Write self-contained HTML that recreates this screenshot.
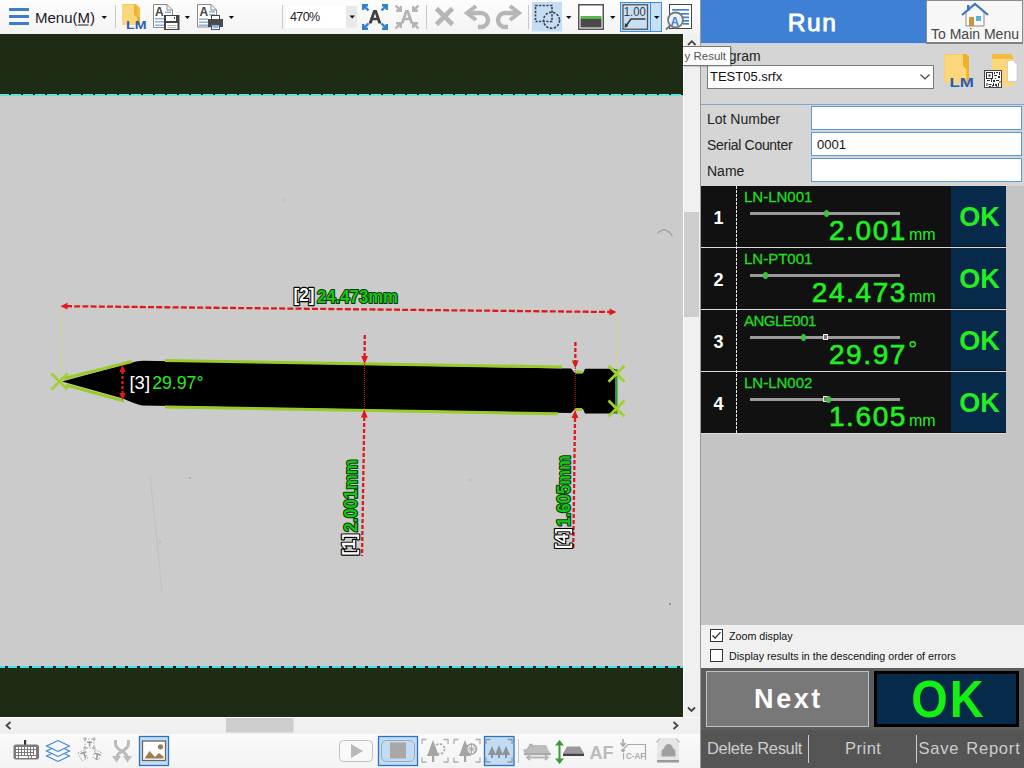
<!DOCTYPE html>
<html><head><meta charset="utf-8">
<style>
*{box-sizing:border-box;margin:0;padding:0}
html,body{width:1024px;height:768px;overflow:hidden;background:#f0f0f0;font-family:"Liberation Sans",sans-serif}
.a{position:absolute}
#tb{left:0;top:0;width:700px;height:34px;background:linear-gradient(#fdfdfd,#f3f3f3)}
#img{left:0;top:34px;width:683px;height:683px;background:#1f2c15;overflow:hidden}
#gray{left:0;top:62px;width:683px;height:570px;background:#cbcbcb}
#vsb{left:683px;top:34px;width:17px;height:683px;background:#f0f0f0;border-left:1px solid #fff}
#hsb{left:0;top:717px;width:700px;height:17px;background:#f0f0f0;border-top:1px solid #fff}
#btb{left:0;top:734px;width:700px;height:34px;background:linear-gradient(#fafafa,#f3f3f3)}
#rp{left:700px;top:0;width:324px;height:768px;background:#d5d5d5;border-left:1px solid #9a9a9a}
</style></head><body>
<div id="tb" class="a"></div>
<svg class="a" style="left:0;top:0" width="700" height="34" viewBox="0 0 700 34">
<g fill="#3d7ccb"><rect x="9" y="8" width="20" height="3" rx="0.5"/><rect x="9" y="15" width="20" height="3" rx="0.5"/><rect x="9" y="22" width="20" height="3" rx="0.5"/></g>
<text x="35" y="23" font-family="Liberation Sans" font-size="15" fill="#1a1a2a">Menu(M)</text>
<rect x="78" y="24.5" width="10.5" height="1" fill="#1a1a2a"/>
<g fill="#c8c8c8"><rect x="115" y="5" width="1" height="23"/><rect x="282" y="5" width="1" height="24"/><rect x="426" y="5" width="1" height="24"/><rect x="528" y="5" width="1" height="24"/></g>
<!-- folder LM -->
<path d="M122 4 H136 L140 8 V25 H122 Z" fill="#f3bf3c"/>
<path d="M122 4.5 H134 L137 7 V15 L140 17 V25 H122 Z" fill="#fbd77c"/>
<path d="M134 4 L137 7 V15 L140 17 V25 H137 V17 L134 15 Z" fill="#eeb12c"/>
<text x="126" y="29" font-family="Liberation Sans" font-weight="bold" font-size="11" fill="#2d5fb4" textLength="20.5" lengthAdjust="spacingAndGlyphs">LM</text>
<!-- doc save -->
<path d="M153.5 4.5 H167 L172.5 10 V27.5 H153.5 Z" fill="#fff" stroke="#8a8a8a" stroke-width="1"/>
<path d="M167 4.5 V10 H172.5" fill="none" stroke="#8a8a8a" stroke-width="1"/>
<text x="155" y="15.5" font-family="Liberation Sans" font-weight="bold" font-size="12" fill="#444">A</text>
<g fill="#8fb0d8"><rect x="165" y="11.5" width="6" height="1.5"/><rect x="155" y="18" width="9" height="1.5"/><rect x="155" y="21" width="9" height="1.5"/><rect x="155" y="24.5" width="9" height="1.5"/></g>
<rect x="164" y="15" width="15.5" height="15" fill="#454545"/>
<rect x="166" y="16" width="10" height="5" fill="#fff"/><rect x="174" y="17" width="1" height="2" fill="#454545"/>
<rect x="166" y="23" width="11.5" height="6" fill="#fff"/>
<g fill="#999"><rect x="167.5" y="25" width="9" height="0.8"/><rect x="167.5" y="27.3" width="9" height="0.8"/></g>
<!-- doc print -->
<path d="M197.5 4.5 H211 L216.5 10 V27 H197.5 Z" fill="#fff" stroke="#8a8a8a" stroke-width="1"/>
<path d="M211 4.5 V10 H216.5" fill="none" stroke="#8a8a8a" stroke-width="1"/>
<text x="199.5" y="16" font-family="Liberation Sans" font-weight="bold" font-size="12" fill="#444">A</text>
<g fill="#8fb0d8"><rect x="209" y="11" width="6" height="1.5"/><rect x="209" y="14" width="6" height="1.5"/><rect x="199" y="18.5" width="9" height="1.5"/><rect x="199" y="21.5" width="9" height="1.5"/><rect x="199" y="24.5" width="9" height="1.5"/></g>
<rect x="211.5" y="15.5" width="8" height="5" fill="#fff" stroke="#444" stroke-width="1"/>
<rect x="208" y="19" width="15" height="8" fill="#4a4a4a"/>
<rect x="211.5" y="25" width="8" height="4.5" fill="#fff" stroke="#3a5a8a" stroke-width="1"/>
<rect x="212.5" y="26.5" width="6" height="1" fill="#3a6ab0"/>
<!-- zoom combo -->
<rect x="286" y="6" width="60" height="22" fill="#fff"/>
<rect x="346" y="6" width="11" height="21.5" fill="#e8e8e8"/>
<text x="290" y="21" font-family="Liberation Sans" font-size="12.5" fill="#222" letter-spacing="-0.6">470%</text>
<!-- expand -->
<path fill-rule="evenodd" d="M368.5 23.5 L373.3 10 H376.7 L381.5 23.5 H378.3 L377.3 20.3 H372.7 L371.7 23.5 Z M373.6 17.8 H376.4 L375 13.3 Z" fill="#404040"/>
<g fill="none" stroke="#2f80d2" stroke-width="2.4">
<path d="M363.2 10 V5.2 H368 M363.8 5.8 L368.5 10.5"/>
<path d="M386.8 10 V5.2 H382 M386.2 5.8 L381.5 10.5"/>
<path d="M363.2 24 V28.8 H368 M363.8 28.2 L368.5 23.5"/>
<path d="M386.8 24 V28.8 H382 M386.2 28.2 L381.5 23.5"/>
</g>
<!-- shrink -->
<path fill-rule="evenodd" d="M400.5 23.5 L405.3 10 H408.7 L413.5 23.5 H410.3 L409.3 20.3 H404.7 L403.7 23.5 Z M405.6 17.8 H408.4 L407 13.3 Z" fill="#b4b4b4"/>
<g fill="none" stroke="#b4b4b4" stroke-width="2.4">
<path d="M400.8 6 V10.8 H396 M400.2 10.2 L395.5 5.5"/>
<path d="M413.2 6 V10.8 H418 M413.8 10.2 L418.5 5.5"/>
<path d="M400.8 28 V23.2 H396 M400.2 23.8 L395.5 28.5"/>
<path d="M413.2 28 V23.2 H418 M413.8 23.8 L418.5 28.5"/>
</g>
<!-- x undo redo -->
<path d="M436.5 8.5 L452.5 24.5 M452.5 8.5 L436.5 24.5" stroke="#b6b6b6" stroke-width="4.6"/>
<g fill="none" stroke="#b6b6b6" stroke-width="4.4">
<path d="M476 6 L467 13 L476 20" stroke-width="4"/>
<path d="M469 13 H481 A7 7 0 0 1 481 27 H478"/>
<path d="M510 6 L519 13 L510 20" stroke-width="4"/>
<path d="M517 13 H505 A7 7 0 0 0 505 27 H508"/>
</g>
<!-- select -->
<rect x="532" y="2" width="30" height="29.5" fill="#c5ddf2"/>
<rect x="535.5" y="5.5" width="16.5" height="16" fill="none" stroke="#34414f" stroke-width="1.6" stroke-dasharray="2.2 1.4"/>
<circle cx="551.5" cy="20.3" r="8" fill="none" stroke="#34414f" stroke-width="1.6" stroke-dasharray="2.4 1.5"/>
<!-- green line -->
<rect x="578.75" y="4.75" width="24.5" height="24.5" fill="#fff" stroke="#555" stroke-width="1.5"/>
<rect x="580.5" y="16" width="21" height="2.5" fill="#50c040"/>
<rect x="580.5" y="18.5" width="21" height="9" fill="#4a4a4a"/>
<!-- 1.00 -->
<rect x="620.5" y="2.5" width="41" height="29" fill="#c8e0f6" stroke="#3d8de0" stroke-width="1"/>
<rect x="650" y="2.5" width="1" height="29" fill="#3d8de0"/>
<rect x="623" y="4.75" width="24.5" height="24.5" fill="none" stroke="#555" stroke-width="1.3"/>
<text x="623.8" y="15.8" font-family="Liberation Sans" font-size="13" fill="#3a3a3a" textLength="22" lengthAdjust="spacingAndGlyphs">1.00</text>
<path d="M645.5 19 H631 L625.5 26.5" fill="none" stroke="#3a3a3a" stroke-width="1.6"/>
<path d="M624.5 28 L625 23 L628.5 26 Z" fill="#3a3a3a"/>
<!-- A magnifier -->
<rect x="669.5" y="4.5" width="22" height="24" fill="#fff" stroke="#444" stroke-width="1"/>
<g fill="#3f82d4"><rect x="672" y="9" width="17" height="1.7"/><rect x="676" y="13" width="13" height="1.7"/><rect x="683" y="16.5" width="6" height="1.7"/><rect x="683" y="20" width="6" height="1.7"/><rect x="683" y="23" width="6" height="1.7"/></g>
<circle cx="675.5" cy="20" r="7.5" fill="#eaf2fa" stroke="#777" stroke-width="1.8"/>
<path d="M670 25.5 L666 29.5" stroke="#777" stroke-width="1.8"/>
<text x="670.5" y="25.5" font-family="Liberation Sans" font-weight="bold" font-size="12" fill="#3f82d4">A</text>
<g fill="#111"><path d="M101.5 16 H107 L104.25 19 Z"/><path d="M184.8 16 H190 L187.4 19 Z"/><path d="M228.8 16 H234 L231.4 19 Z"/><path d="M349.5 15.5 H355 L352.25 18.5 Z"/><path d="M566 16 H571.5 L568.75 19 Z"/><path d="M610 16 H615.5 L612.75 19 Z"/><path d="M654 16 H659.5 L656.75 19 Z"/></g>
</svg>
<svg class="a" style="left:0;top:0" width="683" height="717" viewBox="0 0 683 717">
<rect x="0" y="34" width="683" height="683" fill="#1f2c15"/>
<rect x="0" y="96" width="683" height="570" fill="#cbcbcb"/>
<rect x="0" y="94" width="683" height="2" fill="#5fe6dc"/>
<line x1="9" y1="94.5" x2="683" y2="94.5" stroke="#0a1a10" stroke-width="1" stroke-dasharray="2 10"/>
<rect x="0" y="666" width="683" height="2" fill="#38e8f0"/>
<line x1="5" y1="667" x2="683" y2="667" stroke="#0a1a10" stroke-width="2" stroke-dasharray="3 9"/>
<path d="M657.5 233.5 Q664.5 225 672.5 236" fill="none" stroke="#9c9c9c" stroke-width="1.1"/>
<circle cx="670" cy="604" r="1" fill="#888"/>
<path d="M150 476 L156 530 L162 592" fill="none" stroke="#c0c0c0" stroke-width="1"/>
<circle cx="190" cy="478" r="0.9" fill="#9a9a9a"/><circle cx="160" cy="542" r="0.8" fill="#a0a0a0"/><circle cx="470" cy="480" r="0.8" fill="#a5a5a5"/><circle cx="283" cy="200" r="0.8" fill="#a8a8a8"/>
<!-- pencil -->
<path d="M62 381.5 L132 362.5 Q137 361 143 360.8 L571 368.6 L575 373.3 L583 373.3 L585 368.8 L614 368.8 Q615.5 369 615.5 370 L615.5 412.5 Q615.5 413.4 614 413.4 L585 413.4 L583 409 L575 409 L571 413 L142 405.5 Q135 404 123 398.5 Z" fill="#000"/>
<g stroke="#9acb2a" stroke-width="3" fill="none" stroke-linecap="butt">
<line x1="64" y1="378.5" x2="132" y2="361.5"/>
<line x1="66" y1="385" x2="124" y2="401"/>
<line x1="165" y1="360.5" x2="562" y2="367"/>
<line x1="165" y1="407" x2="558" y2="413.8"/>
<line x1="575.5" y1="372" x2="582.5" y2="372"/>
<line x1="575" y1="409.5" x2="582" y2="409.5"/>
</g>
<line x1="616.5" y1="369" x2="616.5" y2="414" stroke="#2ea02a" stroke-width="2.2"/>
<g stroke="#a2d030" stroke-width="2.8" fill="none">
<path d="M51.5 373.5 L67.5 389.5 M67.5 373.5 L51.5 389.5"/>
<path d="M608.5 365.7 L624.5 381.7 M624.5 365.7 L608.5 381.7"/>
<path d="M608.5 400.6 L624.5 416.6 M624.5 400.6 L608.5 416.6"/>
</g>
<g stroke="#d8d860" stroke-width="1.2" stroke-dasharray="2 1">
<line x1="60.5" y1="310" x2="60.5" y2="376"/>
<line x1="616.5" y1="316" x2="616.5" y2="368"/>
</g>
<!-- red dims -->
<g stroke="#e01818" stroke-width="2.3" fill="none">
<line x1="66" y1="306.2" x2="610" y2="312" stroke-dasharray="6 2.2"/>
<line x1="364.8" y1="335" x2="364.6" y2="356" stroke-dasharray="4 2"/>
<line x1="364.3" y1="417" x2="362" y2="556" stroke-dasharray="4 2"/>
<line x1="575.4" y1="342" x2="575.3" y2="361" stroke-dasharray="4 2"/>
<line x1="575" y1="418" x2="573.3" y2="550" stroke-dasharray="4 2"/>
<line x1="122.5" y1="371" x2="122.5" y2="394" stroke-dasharray="3 2"/>
</g>
<g stroke="#e52222" stroke-width="1" fill="none" stroke-dasharray="1 1">
<line x1="364.5" y1="364" x2="364.3" y2="409"/>
<line x1="575.3" y1="368" x2="575" y2="410"/>
</g>
<g fill="#e01818">
<path d="M60.5 306.2 L67.5 302.8 L67.5 309.6 Z"/>
<path d="M616.5 312 L609.5 308.6 L609.5 315.4 Z"/>
<path d="M364.6 364 L361.2 356 L368 356 Z"/>
<path d="M364.3 409.5 L360.9 417.5 L367.7 417.5 Z"/>
<path d="M575.3 368.5 L571.9 360.5 L578.7 360.5 Z"/>
<path d="M575 410 L571.6 418 L578.4 418 Z"/>
<path d="M122.5 365 L119.3 372 L125.7 372 Z"/>
<path d="M122.5 400 L119.3 393 L125.7 393 Z"/>
</g>
<!-- labels -->
<g font-family="Liberation Sans" font-size="18" font-weight="bold" stroke-linejoin="round">
<text x="293.5" y="301.3" fill="#fff" stroke="#000" stroke-width="2.4" paint-order="stroke" textLength="21" lengthAdjust="spacingAndGlyphs" font-size="19">[2]</text>
<text x="317" y="303" fill="#14c814" stroke="#063806" stroke-width="2.2" paint-order="stroke" textLength="81" lengthAdjust="spacingAndGlyphs">24.473mm</text>
<g transform="translate(357 556) rotate(-90)">
<text x="0.5" y="-1.7" fill="#fff" stroke="#000" stroke-width="2.4" paint-order="stroke" textLength="22" lengthAdjust="spacingAndGlyphs" font-size="19">[1]</text>
<text x="24" y="0" fill="#14c814" stroke="#063806" stroke-width="2.2" paint-order="stroke" textLength="72.5" lengthAdjust="spacingAndGlyphs">2.001mm</text>
</g>
<g transform="translate(569.5 549.6) rotate(-90)">
<text x="0.5" y="-1.7" fill="#fff" stroke="#000" stroke-width="2.4" paint-order="stroke" textLength="21" lengthAdjust="spacingAndGlyphs" font-size="19">[4]</text>
<text x="23" y="0" fill="#14c814" stroke="#063806" stroke-width="2.2" paint-order="stroke" textLength="71.5" lengthAdjust="spacingAndGlyphs">1.605mm</text>
</g>
</g>
<g font-family="Liberation Sans" font-size="19">
<text x="129.5" y="388.5" fill="#fff" textLength="20.5" lengthAdjust="spacingAndGlyphs">[3]</text>
<text x="152.2" y="388.5" fill="#22ee22" textLength="51.3" lengthAdjust="spacingAndGlyphs">29.97°</text>
</g>
</svg>
<div id="vsb" class="a"></div>
<div id="hsb" class="a"></div>
<div id="btb" class="a"></div>
<svg class="a" style="left:0;top:717px" width="700" height="51" viewBox="0 717 700 51">
<path d="M10.5 722 L6.5 725.5 L10.5 729" fill="none" stroke="#444" stroke-width="1.8"/>
<path d="M673.5 722 L677.5 725.5 L673.5 729" fill="none" stroke="#444" stroke-width="1.8"/>
<rect x="226" y="718" width="67.5" height="14.5" fill="#cdcdcd"/>
<!-- keyboard -->
<rect x="24" y="740" width="2.2" height="5" fill="#333"/>
<rect x="13.5" y="744.5" width="25.5" height="15" rx="2.5" fill="#7a7a7a"/>
<g fill="#fff">
<rect x="16" y="747" width="2" height="2"/><rect x="19" y="747" width="2" height="2"/><rect x="22" y="747" width="2" height="2"/><rect x="25" y="747" width="2" height="2"/><rect x="28" y="747" width="2" height="2"/><rect x="31" y="747" width="2" height="2"/><rect x="34" y="747" width="2" height="2"/>
<rect x="16" y="750" width="2" height="2"/><rect x="19" y="750" width="2" height="2"/><rect x="22" y="750" width="2" height="2"/><rect x="25" y="750" width="2" height="2"/><rect x="28" y="750" width="2" height="2"/><rect x="31" y="750" width="2" height="2"/><rect x="34" y="750" width="2" height="5"/>
<rect x="16" y="753" width="2" height="2"/><rect x="19" y="753" width="2" height="2"/><rect x="22" y="753" width="2" height="2"/><rect x="25" y="753" width="2" height="2"/><rect x="28" y="753" width="2" height="2"/><rect x="31" y="753" width="2" height="2"/>
<rect x="16" y="756" width="2" height="2"/><rect x="19" y="756" width="9" height="2"/><rect x="29" y="756" width="2" height="2"/><rect x="32" y="756" width="4" height="2"/>
</g>
<!-- layers -->
<g fill="#f4f8fd" stroke="#3a7fd0" stroke-width="1.1">
<path d="M46.5 756 L58 750.5 L69.5 756 L58 761.5 Z"/>
<path d="M46.5 751 L58 745.5 L69.5 751 L58 756.5 Z"/>
<path d="M46.5 746 L58 740.5 L69.5 746 L58 751.5 Z"/>
</g>
<!-- T icons -->
<g fill="none" stroke="#aaa" stroke-width="1">
<rect x="85" y="739" width="9" height="9" stroke-dasharray="1.5 1.5"/>
<circle cx="85" cy="739" r="1.2"/><circle cx="94" cy="739" r="1.2"/><circle cx="85" cy="748" r="1.2"/><circle cx="94" cy="748" r="1.2"/>
<path d="M78 753 L84 750 L88 758 L82 761 Z" stroke-dasharray="1.5 1.5"/>
<path d="M95 750 L101 752 L99 760 L93 758 Z" stroke-dasharray="1.5 1.5"/>
</g>
<g fill="#999"><rect x="87" y="741.5" width="5" height="1.5"/><rect x="88.8" y="741.5" width="1.5" height="5"/>
<path d="M80 753 L86 751 L86.5 752.3 L84.5 753 L86.5 758 L85 758.5 L83 753.6 L80.5 754.3 Z"/>
<path d="M94.5 752.5 L100.5 754 L100.2 755.4 L98.2 755 L97 760 L95.5 759.6 L96.7 754.6 L94.2 754 Z"/></g>
<!-- crossing arrows -->
<g fill="none" stroke="#bbb" stroke-width="3">
<path d="M115.5 740 V743 Q115.5 748 121.5 751 Q127.5 754 127.5 759"/>
<path d="M128.5 740 V743 Q128.5 748 122.5 751 Q116.5 754 116.5 759"/>
</g>
<g fill="#bbb"><path d="M112 756 L116.5 762.5 L121 756 Z"/><path d="M123 756 L127.5 762.5 L132 756 Z"/></g>
<!-- image selected -->
<rect x="139.5" y="736.5" width="29" height="29" fill="#c2dcf4" stroke="#2c72c0" stroke-width="1.3"/>
<rect x="142.5" y="741" width="23" height="19.5" fill="#fff" stroke="#666" stroke-width="1.3"/>
<path d="M144.5 758.5 L149.5 751 L155 757 L159 753 L163.5 756.5 V758.5 Z" fill="#a07a52"/>
<circle cx="160.5" cy="746.8" r="2.6" fill="#a07a52"/>
<!-- play -->
<rect x="339.5" y="740.5" width="33" height="21" rx="4" fill="#f8f8f8" stroke="#c0c0c0" stroke-width="1"/>
<path d="M351 744 L363 751 L351 758 Z" fill="#b8b8b8"/>
<!-- stop selected -->
<rect x="378.5" y="736.5" width="39" height="29" fill="#c2dcf4" stroke="#2c72c0" stroke-width="1.3"/>
<rect x="381.5" y="740.5" width="33" height="21" rx="5" fill="none" stroke="#9aaabb" stroke-width="1"/>
<rect x="390" y="742.5" width="16" height="16" fill="#a8a8a8"/>
<!-- trees -->
<g fill="none" stroke="#b0b0b0" stroke-width="1.3">
<path d="M422 744 V739.5 H426.5 M443.5 739.5 H448 V744 M422 757.5 V762 H426.5 M443.5 762 H448 V757.5"/>
<path d="M454 744 V739.5 H458.5 M475.5 739.5 H480 V744 M454 757.5 V762 H458.5 M475.5 762 H480 V757.5"/>
<path d="M486 744 V739.5 H490.5 M507.5 739.5 H512 V744 M486 757.5 V762 H490.5 M507.5 762 H512 V757.5" stroke="#9aa8b8"/>
</g>
<g fill="#a5a5a5">
<path d="M433 740 L439 756 H427 Z"/><rect x="432" y="755" width="2.2" height="7"/>
<path d="M465 740 L471 756 H459 Z"/><rect x="464" y="755" width="2.2" height="7"/>
</g>
<circle cx="439.5" cy="749" r="5" fill="none" stroke="#a5a5a5" stroke-width="1.6" stroke-dasharray="2.3 1.6"/>
<circle cx="471.5" cy="749" r="5" fill="#f4f4f4" stroke="#a5a5a5" stroke-width="1.6"/>
<path d="M471.5 744 V754 M466.5 749 H476.5 M468 745.5 L475 752.5 M475 745.5 L468 752.5" stroke="#a5a5a5" stroke-width="1"/>
<rect x="484.5" y="736.5" width="29.5" height="29" fill="#c2dcf4" stroke="#2c72c0" stroke-width="1.3"/>
<path d="M486 744 V739.5 H490.5 M507.5 739.5 H512 V744 M486 757.5 V762 H490.5 M507.5 762 H512 V757.5" fill="none" stroke="#8b9aab" stroke-width="1.3"/>
<g fill="#8d9499">
<path d="M492 746 L496 755 H488 Z"/><rect x="491" y="754" width="2" height="4"/>
<path d="M499 745 L503 755 H495 Z"/><rect x="498" y="754" width="2" height="4"/>
<path d="M506 746 L510 755 H502 Z"/><rect x="505" y="754" width="2" height="4"/>
</g>
<rect x="518" y="739" width="1" height="24" fill="#c8c8c8"/>
<!-- move icons -->
<path d="M529 745 H546 L550 753 H525 Z" fill="#bdbdbd"/>
<rect x="524" y="753" width="27" height="2.2" fill="#aaa"/>
<path d="M527 757.5 H548 M530 755 L527 757.5 L530 760 M545 755 L548 757.5 L545 760" fill="none" stroke="#b5b5b5" stroke-width="1.8"/>
<path d="M524.5 752 L532 744.5 M529 744.5 H532 V747.5 M524.5 749 V752 H527.5" fill="none" stroke="#b5b5b5" stroke-width="1.6"/>
<path d="M559.5 741 V763" stroke="#3c9a3c" stroke-width="2"/>
<path d="M555 745.5 L559.5 740 L564 745.5 Z M555 758.5 L559.5 764 L564 758.5 Z" fill="#3c9a3c"/>
<path d="M567 746.5 H580 L584 753.5 H563 Z" fill="#999"/>
<rect x="563" y="753.5" width="21" height="2.5" fill="#444"/>
<text x="589.5" y="758.5" font-family="Liberation Sans" font-weight="bold" font-size="18" fill="#bbb">AF</text>
<!-- C-AF -->
<path d="M623 739 V745 M620.5 743 L623 746 L625.5 743" fill="none" stroke="#aaa" stroke-width="1.6"/>
<circle cx="623" cy="750.5" r="1.8" fill="#aaa"/>
<path d="M623.5 749 L628 744.5 H645.5 V760" fill="none" stroke="#aaa" stroke-width="1.2"/>
<path d="M623.5 753 V759.5" stroke="#aaa" stroke-width="1.2"/>
<text x="626" y="758.5" font-family="Liberation Sans" font-weight="bold" font-size="9" fill="#aaa" textLength="19" lengthAdjust="spacingAndGlyphs">C-AF</text>
<!-- last -->
<path d="M657 743 L661 738 H675 L679 743 V762 H657 Z" fill="#e6e6e6"/>
<path d="M656.5 742.5 L660 738.5 M679.5 742.5 L676 738.5" stroke="#bbb" stroke-width="1.3"/>
<rect x="657" y="760" width="22" height="2.5" fill="#9a9a9a"/>
<path d="M661.5 756.5 V752 Q661.5 749 664 748.5 Q665 744 668.5 744 Q672 744 673 748.5 Q675.5 749 675.5 752 V756.5 Z" fill="#a0a0a0"/>
</svg>
<div class="a" style="left:683px;top:34px;width:1px;height:683px;background:#fff"></div>
<div class="a" style="left:684px;top:212px;width:15px;height:105px;background:#cdcdcd"></div>
<svg class="a" style="left:683px;top:34px" width="17" height="683" viewBox="683 34 17 683">
<path d="M688 45 L691.8 41.2 L695.6 45" fill="none" stroke="#444" stroke-width="1.8"/>
<path d="M688 707.5 L691.5 711 L695 707.5" fill="none" stroke="#444" stroke-width="1.8"/>
</svg>
<div id="rp" class="a"></div>
<div class="a" style="left:701px;top:0;width:225px;height:43px;background:#3d80d6"></div>
<div class="a" style="left:700px;top:11px;width:225px;text-align:center;color:#fff;font-size:24.5px;line-height:24px;letter-spacing:1.6px;-webkit-text-stroke:0.9px #fff">Run</div>
<div class="a" style="left:701px;top:43px;width:225px;height:1px;background:#c6d2de"></div>
<div class="a" style="left:926px;top:0;width:97px;height:44px;background:#f7f7f7;border:1px solid #8c8c8c;border-bottom:2px solid #808080"></div>
<div class="a" style="left:926px;top:26px;width:98px;text-align:center;color:#454545;font-size:14px;line-height:16px">To Main Menu</div>
<svg class="a" style="left:960px;top:2px" width="30" height="26" viewBox="0 0 30 26">
 <path d="M6 10 V24 H24 V10" fill="#fafafa" stroke="#8a8a8a" stroke-width="1"/>
 <rect x="9" y="15" width="5" height="9" fill="#c8963c"/>
 <rect x="16" y="14" width="5" height="5" fill="#5ab4d6"/>
 <path d="M2 13 L15 2 L28 13" fill="none" stroke="#3a78c0" stroke-width="2.2"/>
 <rect x="7" y="3" width="2.5" height="6" fill="#3a78c0"/>
</svg>
<div class="a" style="left:707px;top:48px;font-size:14px;color:#222">Program</div>
<svg class="a" style="left:940px;top:50px" width="84" height="42" viewBox="940 50 84 42">
<path d="M944.5 54 H966 L969 57 V83 H944.5 Z" fill="#f2bd3a"/>
<path d="M944.5 54.5 H963 V66 L966.5 69 V83 H944.5 Z" fill="#fcd67a"/>
<path d="M963 54 H966 L969 57 V83 H966.5 V69 L963 66 Z" fill="#efb02a"/>
<text x="949.5" y="87.3" font-family="Liberation Sans" font-weight="bold" font-size="13" fill="#2a5db2" textLength="24.5" lengthAdjust="spacingAndGlyphs">LM</text>
<path d="M992 54 H1011 L1013 57 V86 H992 Z" fill="#fcd67a"/>
<path d="M992 54 H1011 L1013 57 V59 H992 Z" fill="#f2bd3a"/>
<path d="M1007.5 60.5 H1013 L1017 64.5 V81.5 H1007.5 Z" fill="#fff" stroke="#c9c9c9" stroke-width="0.8"/>
<rect x="984.5" y="70.5" width="17" height="17" fill="#fff" stroke="#444" stroke-width="1"/>
<rect x="986.5" y="72.5" width="6" height="6" fill="none" stroke="#333" stroke-width="1"/>
<rect x="988.5" y="74.5" width="2" height="2" fill="#333"/>
<g fill="#333"><rect x="994" y="72" width="1" height="2"/><rect x="996" y="72" width="2" height="1"/><rect x="999" y="72" width="1" height="3"/><rect x="994" y="75" width="3" height="1"/><rect x="998" y="76" width="2" height="2"/><rect x="995" y="78" width="1" height="1"/><rect x="987" y="80" width="3" height="1"/><rect x="991" y="79" width="1" height="3"/><rect x="986.5" y="83" width="1" height="3"/><rect x="988.5" y="84" width="3" height="1"/><rect x="993" y="80" width="2" height="2"/><rect x="996" y="80" width="3" height="1"/><rect x="999.5" y="81" width="1" height="2"/><rect x="993" y="83" width="1" height="3"/><rect x="995" y="84" width="2" height="2"/><rect x="998" y="83" width="1" height="3"/><rect x="989" y="86" width="2" height="1"/><rect x="996" y="86.5" width="3" height="1"/><rect x="992" y="85" width="1" height="1.5"/></g>
</svg>

<div class="a" style="left:707px;top:65px;width:227px;height:24px;background:#fff;border:1px solid #7a7a7a"></div>
<div class="a" style="left:710px;top:69px;font-size:13px;color:#111;line-height:15px">TEST05.srfx</div>
<svg class="a" style="left:919px;top:73px" width="12" height="8" viewBox="0 0 12 8"><path d="M1.5 1.5 L6 6 L10.5 1.5" fill="none" stroke="#444" stroke-width="1.2"/></svg>
<div class="a" style="left:701px;top:104px;width:323px;height:1px;background:#7aa6d8"></div>
<div class="a" style="left:707px;top:111px;font-size:14px;color:#222;line-height:16px">Lot Number</div>
<div class="a" style="left:707px;top:137px;font-size:14px;color:#222;line-height:16px;letter-spacing:-0.3px">Serial Counter</div>
<div class="a" style="left:707px;top:163px;font-size:14px;color:#222;line-height:16px">Name</div>
<div class="a" style="left:811px;top:106px;width:211px;height:24px;background:#fff;border:1px solid #5b9bd5"></div>
<div class="a" style="left:811px;top:132px;width:211px;height:24px;background:#fff;border:1px solid #5b9bd5"></div>
<div class="a" style="left:811px;top:158px;width:211px;height:24px;background:#fff;border:1px solid #5b9bd5"></div>
<div class="a" style="left:817px;top:137px;font-size:13px;color:#111;line-height:15px">0001</div>
<div class="a" style="left:701px;top:433px;width:323px;height:192px;background:#c4c4c4"></div>
<div class="a" style="left:701px;top:186px;width:323px;height:247px;background:#c4c4c4"></div>
<div class="a" style="left:701px;top:186px;width:305px;height:61px;background:#111"></div>
<div class="a" style="left:951px;top:186px;width:55px;height:60px;background:#082a4a"></div>
<div class="a" style="left:701px;top:247px;width:305px;height:1px;background:#dcdcdc"></div>
<div class="a" style="left:701px;top:208px;width:35px;text-align:center;color:#fff;font-weight:bold;font-size:18px;line-height:20px">1</div>
<div class="a" style="left:744px;top:189px;color:#22dd22;font-size:15px;line-height:16px;-webkit-text-stroke:0.3px #22dd22">LN-LN001</div>
<div class="a" style="left:750px;top:212px;width:150px;height:3px;background:#9a9a9a"></div>
<div class="a" style="left:824px;top:210px;width:5px;height:7px;border-radius:50%;background:#3cc43c"></div>
<div class="a" style="left:703px;top:217px;width:204px;text-align:right;color:#22ee22;font-size:28px;line-height:28px;letter-spacing:1.6px;-webkit-text-stroke:0.6px #22ee22">2.001</div>
<div class="a" style="left:909px;top:227px;color:#22ee22;font-size:16px;line-height:16px">mm</div>
<div class="a" style="left:951px;top:204px;width:55px;text-align:center;color:#22ee22;font-weight:bold;font-size:27px;line-height:26px;padding-left:2px">OK</div>
<div class="a" style="left:701px;top:248px;width:305px;height:61px;background:#111"></div>
<div class="a" style="left:951px;top:248px;width:55px;height:60px;background:#082a4a"></div>
<div class="a" style="left:701px;top:309px;width:305px;height:1px;background:#dcdcdc"></div>
<div class="a" style="left:701px;top:270px;width:35px;text-align:center;color:#fff;font-weight:bold;font-size:18px;line-height:20px">2</div>
<div class="a" style="left:744px;top:251px;color:#22dd22;font-size:15px;line-height:16px;-webkit-text-stroke:0.3px #22dd22">LN-PT001</div>
<div class="a" style="left:750px;top:274px;width:150px;height:3px;background:#9a9a9a"></div>
<div class="a" style="left:763px;top:272px;width:5px;height:7px;border-radius:50%;background:#3cc43c"></div>
<div class="a" style="left:703px;top:279px;width:204px;text-align:right;color:#22ee22;font-size:28px;line-height:28px;letter-spacing:1.6px;-webkit-text-stroke:0.6px #22ee22">24.473</div>
<div class="a" style="left:909px;top:289px;color:#22ee22;font-size:16px;line-height:16px">mm</div>
<div class="a" style="left:951px;top:266px;width:55px;text-align:center;color:#22ee22;font-weight:bold;font-size:27px;line-height:26px;padding-left:2px">OK</div>
<div class="a" style="left:701px;top:310px;width:305px;height:61px;background:#111"></div>
<div class="a" style="left:951px;top:310px;width:55px;height:60px;background:#082a4a"></div>
<div class="a" style="left:701px;top:371px;width:305px;height:1px;background:#dcdcdc"></div>
<div class="a" style="left:701px;top:332px;width:35px;text-align:center;color:#fff;font-weight:bold;font-size:18px;line-height:20px">3</div>
<div class="a" style="left:744px;top:313px;color:#22dd22;font-size:15px;line-height:16px;letter-spacing:-0.5px;-webkit-text-stroke:0.3px #22dd22">ANGLE001</div>
<div class="a" style="left:750px;top:336px;width:150px;height:3px;background:#9a9a9a"></div>
<div class="a" style="left:823px;top:334px;width:5px;height:6px;background:#777;border:1px solid #eee"></div>
<div class="a" style="left:801px;top:334px;width:5px;height:7px;border-radius:50%;background:#3cc43c"></div>
<div class="a" style="left:703px;top:341px;width:204px;text-align:right;color:#22ee22;font-size:28px;line-height:28px;letter-spacing:1.6px;-webkit-text-stroke:0.6px #22ee22">29.97</div>
<svg class="a" style="left:905px;top:336px" width="16" height="16" viewBox="905 336 16 16"><circle cx="912.7" cy="344.3" r="2.6" fill="none" stroke="#22ee22" stroke-width="1.4"/></svg>
<div class="a" style="left:951px;top:328px;width:55px;text-align:center;color:#22ee22;font-weight:bold;font-size:27px;line-height:26px;padding-left:2px">OK</div>
<div class="a" style="left:701px;top:372px;width:305px;height:61px;background:#111"></div>
<div class="a" style="left:951px;top:372px;width:55px;height:60px;background:#082a4a"></div>
<div class="a" style="left:701px;top:433px;width:305px;height:1px;background:#dcdcdc"></div>
<div class="a" style="left:701px;top:394px;width:35px;text-align:center;color:#fff;font-weight:bold;font-size:18px;line-height:20px">4</div>
<div class="a" style="left:744px;top:375px;color:#22dd22;font-size:15px;line-height:16px;-webkit-text-stroke:0.3px #22dd22">LN-LN002</div>
<div class="a" style="left:750px;top:398px;width:150px;height:3px;background:#9a9a9a"></div>
<div class="a" style="left:823px;top:396px;width:5px;height:6px;background:#777;border:1px solid #eee"></div>
<div class="a" style="left:826px;top:396px;width:5px;height:7px;border-radius:50%;background:#3cc43c"></div>
<div class="a" style="left:703px;top:403px;width:204px;text-align:right;color:#22ee22;font-size:28px;line-height:28px;letter-spacing:1.6px;-webkit-text-stroke:0.6px #22ee22">1.605</div>
<div class="a" style="left:909px;top:413px;color:#22ee22;font-size:16px;line-height:16px">mm</div>
<div class="a" style="left:951px;top:390px;width:55px;text-align:center;color:#22ee22;font-weight:bold;font-size:27px;line-height:26px;padding-left:2px">OK</div>
<div class="a" style="left:736px;top:186px;width:1px;height:247px;background:repeating-linear-gradient(#e8e8e8 0 3px,transparent 3px 4px)"></div>
<div class="a" style="left:701px;top:625px;width:323px;height:43px;background:#f0f0f0"></div>
<div class="a" style="left:710px;top:629px;width:13px;height:13px;border:1px solid #333;background:#fff"></div>
<svg class="a" style="left:710px;top:629px" width="13" height="13" viewBox="0 0 13 13"><path d="M2.5 6.5 L5.2 9.2 L10.5 3.2" fill="none" stroke="#222" stroke-width="1.2"/></svg>
<div class="a" style="left:710px;top:649px;width:13px;height:13px;border:1px solid #333;background:#fff"></div>
<div class="a" style="left:729px;top:629px;font-size:10.7px;color:#111;line-height:14px">Zoom display</div>
<div class="a" style="left:729px;top:649px;font-size:10.7px;color:#111;line-height:14px">Display results in the descending order of errors</div>
<div class="a" style="left:701px;top:668px;width:323px;height:62px;background:#5c5c5c"></div>
<div class="a" style="left:706px;top:671px;width:163px;height:56px;background:#787878;border:1px solid #c0c0c0"></div>
<div class="a" style="left:706px;top:685px;width:163px;text-align:center;color:#fff;font-weight:bold;font-size:27px;line-height:28px;letter-spacing:2.6px;padding-left:2px">Next</div>
<div class="a" style="left:874px;top:671px;width:145px;height:56px;background:#062b4a;border:3px solid #000"></div>
<div class="a" style="left:874px;top:675px;width:145px;text-align:center;color:#14f014;font-weight:bold;font-size:47px;line-height:44px;letter-spacing:2px;padding-left:4px;transform:scaleY(1.1);transform-origin:50% 0">OK</div>
<div class="a" style="left:701px;top:730px;width:323px;height:38px;background:#555"></div>
<div class="a" style="left:707px;top:738px;font-size:16.5px;color:#cdcdcd;line-height:20px;letter-spacing:-0.3px">Delete Result</div>
<div class="a" style="left:845px;top:738px;font-size:16.5px;color:#cdcdcd;line-height:20px;letter-spacing:0.5px">Print</div>
<div class="a" style="left:918.5px;top:738px;font-size:16.5px;color:#cdcdcd;line-height:20px;letter-spacing:0.8px;word-spacing:1.5px">Save Report</div>
<div class="a" style="left:808px;top:735px;width:1px;height:28px;background:#cfcfcf"></div>
<div class="a" style="left:916px;top:735px;width:1px;height:28px;background:#cfcfcf"></div>
<div class="a" style="left:683px;top:46px;width:48px;height:20px;background:#fbfbfb;border:1px solid #767676;border-left:none;box-shadow:1px 1px 1px rgba(0,0,0,0.15)"></div>
<div class="a" style="left:683px;top:48px;width:48px;height:16px;overflow:hidden"><div style="position:absolute;left:1.5px;top:0;font-size:11.5px;line-height:16px;color:#575757;white-space:nowrap">y Result</div></div>
</body></html>
